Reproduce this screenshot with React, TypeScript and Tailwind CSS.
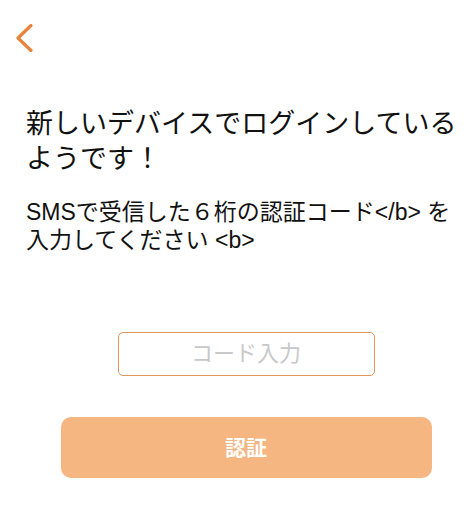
import React from "react";

export default function App() {
  return (
    <div
      className="w-[466px] h-[516px] bg-white text-[#111111] overflow-hidden"
      style={{ fontFamily: '"Liberation Sans", "Noto Sans CJK JP", sans-serif' }}
    >
      <div className="pl-[16px] pt-[24px] h-[107px]">
        <svg width="18" height="28" viewBox="0 0 18 28" fill="none">
          <path
            d="M15 1.5 L2 14 L15 26.5"
            stroke="#e8843c"
            strokeWidth="3.2"
            strokeLinecap="round"
            strokeLinejoin="round"
          />
        </svg>
      </div>
      <div className="pl-[26px] flex flex-col">
        <h1 className="text-[27px] leading-[35px] font-normal">
          新しいデバイスでログインしているようです！
        </h1>
        <p className="mt-[21px] text-[23px] leading-[28px]">
          SMSで受信した６桁の認証コード&lt;/b&gt; を入力してください &lt;b&gt;
        </p>
        <div className="mt-[78px] flex justify-center">
          <input
            className="w-[257px] h-[44px] border border-[#e0965a] rounded-[5px] text-center text-[22px] outline-none placeholder:text-[#c8c8c8]"
            placeholder="コード入力"
          />
        </div>
        <div className="mt-[41px] flex justify-center">
          <button className="w-[371px] h-[61px] rounded-[10px] bg-[#f5b682] text-white text-[21px] font-bold">
            認証
          </button>
        </div>
      </div>
    </div>
  );
}
